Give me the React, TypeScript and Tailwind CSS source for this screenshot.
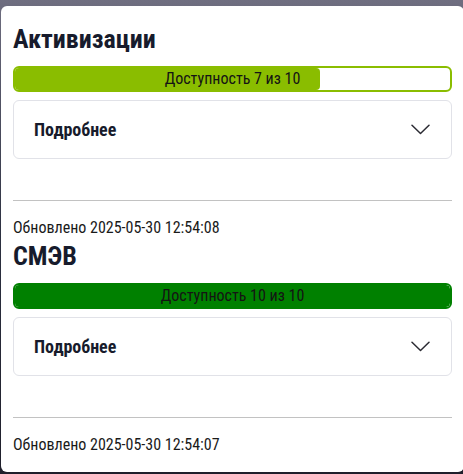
import React from "react";

type Item = {
  title: string;
  done: number;
  total: number;
  color: string;
  updated: string;
};

const items: Item[] = [
  { title: "Активизации", done: 7, total: 10, color: "#8abd00", updated: "2025-05-30 12:54:08" },
  { title: "СМЭВ", done: 10, total: 10, color: "#008000", updated: "2025-05-30 12:54:07" },
];

function Chevron() {
  return (
    <svg width="19" height="11" viewBox="0 0 19 11" fill="none" className="shrink-0">
      <path d="M1 1.2 L9.5 9.5 L18 1.2" stroke="#2b2b33" strokeWidth="1.5" strokeLinecap="round" strokeLinejoin="round" />
    </svg>
  );
}

function Availability({ done, total, color }: { done: number; total: number; color: string }) {
  const pct = (done / total) * 100;
  return (
    <div
      className="relative h-[26px] w-full overflow-hidden rounded-md border-2 bg-white"
      style={{ borderColor: color }}
    >
      <div className="h-full rounded-r-[4px]" style={{ width: `${pct}%`, backgroundColor: color }} />
      <div className="absolute inset-0 flex items-center justify-center text-[16px] text-[#141414]">
        Доступность {done} из {total}
      </div>
    </div>
  );
}

function Section({ item }: { item: Item }) {
  return (
    <section className="flex flex-col">
      <h2 className="text-[26px] font-bold leading-[32px] text-[#171b2c]">{item.title}</h2>
      <div className="mt-[11px]">
        <Availability done={item.done} total={item.total} color={item.color} />
      </div>
      <button className="mt-2 flex h-[59px] w-full items-center justify-between rounded-md border border-[#e1e2e8] pl-5 pr-[21px] text-left">
        <span className="text-[18px] font-bold text-[#171b2c]">Подробнее</span>
        <Chevron />
      </button>
      <hr className="mt-[41px] border-t border-[#c2c2c2]" />
      <p className="mt-[15px] text-[16px] leading-6 text-[#1a1a1a]">Обновлено {item.updated}</p>
    </section>
  );
}

export default function App() {
  return (
    <div
      className="h-[474px] w-[463px] overflow-hidden bg-gradient-to-b from-[#6f6e80] via-[#2c3040] to-[#1f1f2b] pt-[6px] pl-[1px]"
      style={{ fontFamily: '"Roboto Condensed", Roboto, "Liberation Sans Narrow", sans-serif', fontStretch: "condensed" }}
    >
      <div className="w-[463px] rounded-md bg-white px-3 pt-[17px] pb-[15px]">
        {items.map((item) => (
          <Section key={item.title} item={item} />
        ))}
      </div>
    </div>
  );
}
